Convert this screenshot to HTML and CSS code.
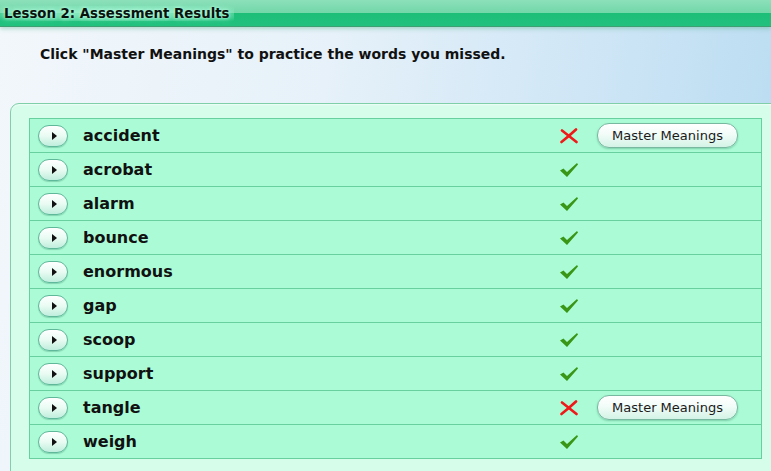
FILE: index.html
```html
<!DOCTYPE HTML>
<html lang="en-US">
<head>
	<meta charset="UTF-8" />
	<title>Assessment Results</title>
	<link rel="stylesheet" href="styles.css">
</head>
<body>
	<div class="header">
		<span class="title">Lesson 2: Assessment Results</span>
	</div>
	<div class="content">
		<p class="instruction">Click "Master Meanings" to practice the words you missed.</p>
		<div class="panel">
			<div class="results">
				<div class="row">
					<span class="toggle"><i></i></span>
					<span class="word">accident</span>
					<span class="mark"><svg width="18" height="16" viewBox="0 0 18 16"><path d="M2 2.5 Q9 8 16.5 14 M16 1.5 Q9 8 1.5 14" stroke="#f01818" stroke-width="2.6" stroke-linecap="round" fill="none"/></svg></span>
					<span class="master">Master Meanings</span>
				</div>
				<div class="row">
					<span class="toggle"><i></i></span>
					<span class="word">acrobat</span>
					<span class="mark"><svg width="20" height="16" viewBox="0 0 20 16"><path d="M1 8.5 L4.5 6.5 L8 10 L18 1 L19 2.5 L8 15 Z" fill="#3a9616"/></svg></span>
					<span class="blank"></span>
				</div>
				<div class="row">
					<span class="toggle"><i></i></span>
					<span class="word">alarm</span>
					<span class="mark"><svg width="20" height="16" viewBox="0 0 20 16"><path d="M1 8.5 L4.5 6.5 L8 10 L18 1 L19 2.5 L8 15 Z" fill="#3a9616"/></svg></span>
					<span class="blank"></span>
				</div>
				<div class="row">
					<span class="toggle"><i></i></span>
					<span class="word">bounce</span>
					<span class="mark"><svg width="20" height="16" viewBox="0 0 20 16"><path d="M1 8.5 L4.5 6.5 L8 10 L18 1 L19 2.5 L8 15 Z" fill="#3a9616"/></svg></span>
					<span class="blank"></span>
				</div>
				<div class="row">
					<span class="toggle"><i></i></span>
					<span class="word">enormous</span>
					<span class="mark"><svg width="20" height="16" viewBox="0 0 20 16"><path d="M1 8.5 L4.5 6.5 L8 10 L18 1 L19 2.5 L8 15 Z" fill="#3a9616"/></svg></span>
					<span class="blank"></span>
				</div>
				<div class="row">
					<span class="toggle"><i></i></span>
					<span class="word">gap</span>
					<span class="mark"><svg width="20" height="16" viewBox="0 0 20 16"><path d="M1 8.5 L4.5 6.5 L8 10 L18 1 L19 2.5 L8 15 Z" fill="#3a9616"/></svg></span>
					<span class="blank"></span>
				</div>
				<div class="row">
					<span class="toggle"><i></i></span>
					<span class="word">scoop</span>
					<span class="mark"><svg width="20" height="16" viewBox="0 0 20 16"><path d="M1 8.5 L4.5 6.5 L8 10 L18 1 L19 2.5 L8 15 Z" fill="#3a9616"/></svg></span>
					<span class="blank"></span>
				</div>
				<div class="row">
					<span class="toggle"><i></i></span>
					<span class="word">support</span>
					<span class="mark"><svg width="20" height="16" viewBox="0 0 20 16"><path d="M1 8.5 L4.5 6.5 L8 10 L18 1 L19 2.5 L8 15 Z" fill="#3a9616"/></svg></span>
					<span class="blank"></span>
				</div>
				<div class="row">
					<span class="toggle"><i></i></span>
					<span class="word">tangle</span>
					<span class="mark"><svg width="18" height="16" viewBox="0 0 18 16"><path d="M2 2.5 Q9 8 16.5 14 M16 1.5 Q9 8 1.5 14" stroke="#f01818" stroke-width="2.6" stroke-linecap="round" fill="none"/></svg></span>
					<span class="master">Master Meanings</span>
				</div>
				<div class="row">
					<span class="toggle"><i></i></span>
					<span class="word">weigh</span>
					<span class="mark"><svg width="20" height="16" viewBox="0 0 20 16"><path d="M1 8.5 L4.5 6.5 L8 10 L18 1 L19 2.5 L8 15 Z" fill="#3a9616"/></svg></span>
					<span class="blank"></span>
				</div>
			</div>
		</div>
	</div>
</body>
</html>
```

FILE: styles.css
```css
html, body {
	margin: 0;
	padding: 0;
	height: 100%;
	overflow: hidden;
}
body {
	font-family: "DejaVu Sans", Verdana, sans-serif;
	color: #111;
	background: linear-gradient(100deg, #f2f7fb 0%, #e6f1f9 40%, #cfe6f6 70%, #b6daf0 100%);
}

/* title bar */

.header {
	height: 26px;
	border-bottom: 1px solid #3e9f72;
	background: linear-gradient(to bottom, #8ce0ba 0%, #72d7a9 50%, #1dbe78 51%, #22c27e 100%);
	box-shadow: 0 2px 4px rgba(60, 170, 120, 0.35);
	display: flex;
	align-items: center;
}
.title {
	font-weight: bold;
	font-size: 13.3px;
	padding: 0 4px;
	color: #0a120e;
	text-shadow: 0 0 3px #b8fbe0, 0 0 6px #a8f5d5;
	background: radial-gradient(ellipse at center, rgba(170, 248, 215, 0.85) 0%, rgba(140, 236, 195, 0.5) 60%, rgba(120, 230, 180, 0) 100%);
}

/* content */

.content {
	display: flex;
	flex-direction: column;
}
.instruction {
	margin: 19px 0 0 40px;
	font-size: 14px;
	font-weight: bold;
	height: 57px;
}
.panel {
	margin-left: 10px;
	margin-right: -20px;
	padding: 14px 0 30px 18px;
	border: 1px solid #7fcfa8;
	border-radius: 9px 0 0 0;
	background: #d6fcea;
	box-shadow: inset 0 1px 2px #f0fff8;
}
.results {
	width: 731px;
	border: 1px solid #68d09f;
	background: #abfcd6;
}
.row {
	display: flex;
	align-items: center;
	height: 33px;
	padding: 0 23px 0 8px;
	border-top: 1px solid #68d09f;
}
.row:first-child {
	border-top: none;
}
.toggle {
	width: 28px;
	height: 20px;
	border: 1px solid #5fb89a;
	border-radius: 11px;
	background: linear-gradient(to bottom, #ffffff 0%, #e9fbf3 50%, #bfeedd 100%);
	box-shadow: 0 1px 1px rgba(40, 120, 90, 0.3);
	display: flex;
	align-items: center;
	justify-content: center;
}
.toggle i {
	width: 0;
	height: 0;
	margin-left: 2px;
	border-top: 4px solid transparent;
	border-bottom: 4px solid transparent;
	border-left: 5px solid #111;
}
.word {
	flex: 1;
	margin-left: 15px;
	font-size: 16px;
	font-weight: bold;
}
.mark {
	width: 20px;
	display: flex;
	justify-content: center;
	margin-right: 18px;
}
.blank {
	width: 141px;
}
.master {
	width: 139px;
	height: 23px;
	border: 1px solid #78b8a0;
	border-radius: 12px;
	background: linear-gradient(to bottom, #ffffff 0%, #f2fcf8 45%, #d3f3e6 100%);
	box-shadow: 0 1px 2px rgba(40, 120, 90, 0.35);
	font-size: 13px;
	color: #1a1a1a;
	display: flex;
	align-items: center;
	justify-content: center;
}
```
